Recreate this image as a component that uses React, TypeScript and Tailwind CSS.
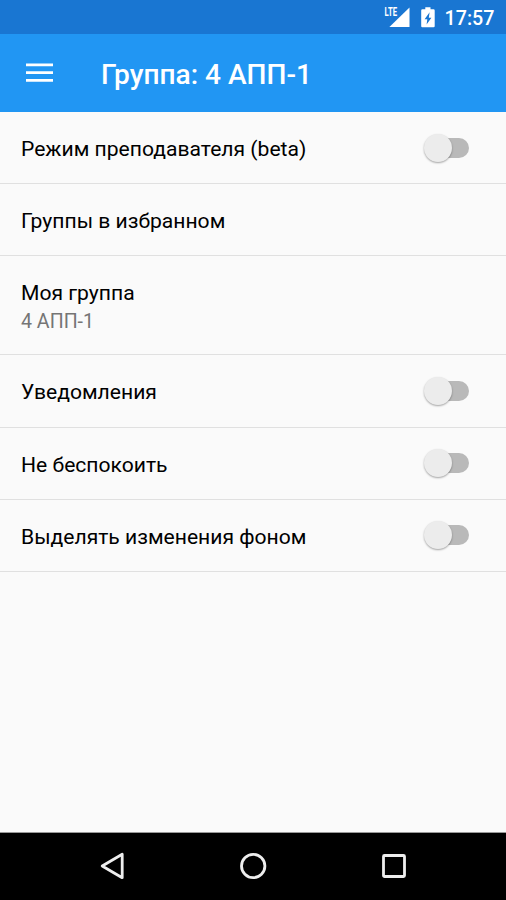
import React from "react";

function StatusBar() {
  return (
    <div className="flex h-[34px] shrink-0 items-center justify-end bg-[#1976d2] pr-[11.5px] text-white">
      <svg width="28" height="30" viewBox="0 -4 28 30" className="mr-[10px] overflow-visible">
        <path d="M26.5 1.4V20.9H6.4Z" fill="#fff" />
        <path d="M0 0H14.5V12H11L6 14H0Z" fill="#1976d2" />
        <text x="1.6" y="10" fontSize="12" fontWeight="700" fontFamily="Roboto, sans-serif" fill="#fff" textLength="12.4" lengthAdjust="spacingAndGlyphs">LTE</text>
      </svg>
      <svg width="14" height="21" viewBox="0 0 14 21" className="mr-[10px]">
        <path d="M4.3 0.3H9.5V2.3H12.5Q13.7 2.3 13.7 3.5V19.3Q13.7 20.3 12.5 20.3H1.4Q0.2 20.3 0.2 19.3V3.5Q0.2 2.3 1.4 2.3H4.3Z" fill="#fff" />
        <path d="M8.6 5.2L3.6 12.2H6.3L5.6 17.5L10.4 10.8H7.8Z" fill="#1976d2" />
      </svg>
      <span className="mt-[3px] text-[19.7px] leading-[20px] font-medium">17:57</span>
    </div>
  );
}

function Toggle() {
  return (
    <span className="flex h-[32px] w-[46px] items-center">
      <span className="z-10 size-[28px] shrink-0 rounded-full bg-[#ececec] shadow-[0_1px_2px_rgba(0,0,0,0.35)]" />
      <span className="-ml-[20px] h-[20px] w-[37px] shrink-0 rounded-full bg-[#b9b9b9]" />
    </span>
  );
}

type RowProps = { label: string; value?: string; toggle?: boolean; height: string; offset?: string };

function Row({ label, value, toggle, height, offset = "pt-[2px]" }: RowProps) {
  return (
    <div className={`flex shrink-0 items-center justify-between border-b border-[#e0e0e0] pr-[36px] pl-[21px] ${height}`}>
      <div className={`flex flex-col ${offset}`}>
        <span className="text-[21.1px] leading-[28px] whitespace-nowrap text-black">{label}</span>
        {value && <span className="mt-px text-[19.6px] leading-[28px] text-[#757575]">{value}</span>}
      </div>
      {toggle && <Toggle />}
    </div>
  );
}

export default function App() {
  return (
    <div className="flex h-[900px] w-[506px] flex-col overflow-hidden bg-[#fafafa] font-['Roboto',sans-serif]">
      <StatusBar />
      <header className="flex h-[78px] shrink-0 items-center bg-[#2196f3] pl-[26px] text-white">
        <svg width="27" height="19" viewBox="0 0 27 19" className="-mt-px">
          <path d="M0 1.9H27M0 9.7H27M0 17.3H27" stroke="#fff" strokeWidth="2.8" />
        </svg>
        <h1 className="mt-[3px] ml-[48px] text-[28.1px] leading-[30px] font-medium whitespace-nowrap">Группа: 4 АПП-1</h1>
      </header>
      <main className="flex flex-1 flex-col">
        <Row label="Режим преподавателя (beta)" toggle height="h-[72px]" />
        <Row label="Группы в избранном" height="h-[72px]" />
        <Row label="Моя группа" value="4 АПП-1" height="h-[99px]" offset="pt-[5px]" />
        <Row label="Уведомления" toggle height="h-[72.5px]" />
        <Row label="Не беспокоить" toggle height="h-[72px]" offset="pt-[3px]" />
        <Row label="Выделять изменения фоном" toggle height="h-[72px]" offset="pt-[3px]" />
      </main>
      <nav className="flex h-[68px] shrink-0 items-center justify-center gap-[114px] border-t border-[#999] bg-black pb-px">
        <svg width="27" height="28" viewBox="0 0 27 28">
          <path d="M23.2 2.3V25.7L3.2 14Z" fill="none" stroke="#eee" strokeWidth="2.8" strokeLinejoin="round" />
        </svg>
        <svg width="27" height="28" viewBox="0 0 27 28">
          <circle cx="13.2" cy="14" r="11.7" fill="none" stroke="#eee" strokeWidth="2.8" />
        </svg>
        <svg width="27" height="28" viewBox="0 0 27 28">
          <rect x="2.5" y="3.5" width="21" height="21" rx="1" fill="none" stroke="#eee" strokeWidth="2.8" />
        </svg>
      </nav>
    </div>
  );
}
